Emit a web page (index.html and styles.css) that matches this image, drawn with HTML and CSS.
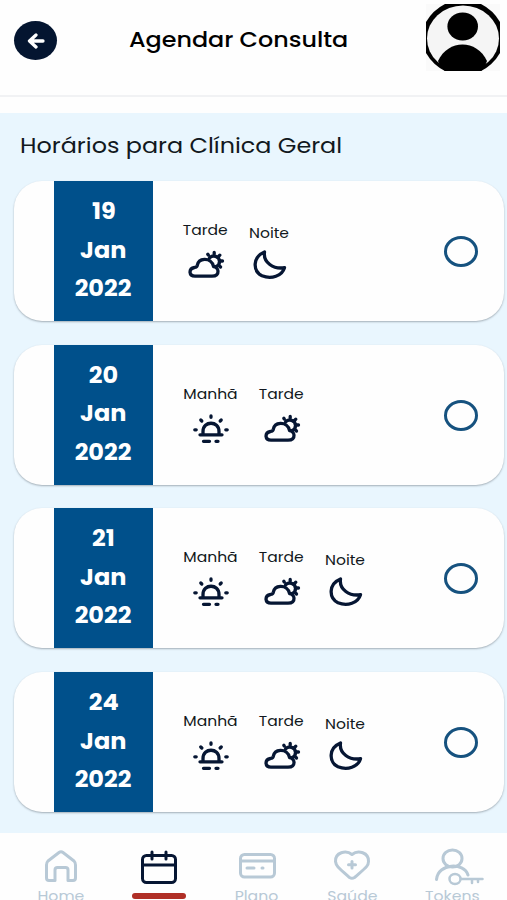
FILE: index.html
```html
<!DOCTYPE html>
<html lang="pt-BR">
<head>
    <meta charset="UTF-8">
    <meta name="viewport" content="width=device-width, initial-scale=1.0">
    <title>Agendar Consulta</title>
    <link rel="stylesheet" href="styles.css">
</head>
<body>

    <!-- icons -->
    <svg class="sprite">
        <symbol id="cloud" viewBox="0 0 38 32">
            <path d="M8 27.200 H25 C29.500 27.200 31.200 25 31 22 C30.800 19.500 28.500 17.800 26.500 17.500 C25.500 12.500 21.500 10.200 17.500 10.300 C13.500 10.500 10.800 13 10.300 16.300 C10 17.700 9 18.200 7.500 18.500 C4.500 19 3 21 3 23.200 C3.200 25.800 5 27.200 8 27.200 Z"/>
            <path d="M22.500 9 C25.500 5.300 32.500 7 32.500 12.500 C32.500 15 31.200 16.800 29 17.500 M21.300 6 L20.800 5.300 M27.200 5 V3.500 M32 7 L32.800 6.200 M34 12 H35.500 M32.500 17 L33.500 18"/>
        </symbol>
        <symbol id="moon" viewBox="0 0 34 32">
            <path d="M11.500 3 C-0.500 8 -0.500 22 9 26.800 C18.500 30.500 29 27 31.500 18.700 C20.500 20.500 10 13.500 11.500 3 Z"/>
        </symbol>
        <symbol id="sunrise" viewBox="0 0 38 32">
            <path d="M8 21.800 H30 M11 21.500 V18.500 C11 7.500 27 7.500 27 18.500 V21.500 M19 3 V4.300 M8.800 7 L9.800 8 M29.200 7 L28.200 8 M2.800 16.800 H4.200 M33.800 16.800 H35.200 M11.500 28.300 H17.500 M24 28.300 H26"/>
        </symbol>
    </svg>

    <div class="app">
        <header class="header">
            <button class="back-btn" aria-label="Voltar">
                <svg viewBox="0 0 18 16"><path d="M16 8 H3 M9 2 L2.500 8 L9 14"/></svg>
            </button>
            <h1><span>Agendar Consulta</span></h1>
            <svg class="avatar" viewBox="0 0 74 67">
                <rect width="74" height="67" fill="#fafafa"/>
                <path d="M19 0 H55 Q67 6 74 18 V49 Q67 61 55 67 H19 Q7 61 0 49 V18 Q7 6 19 0 Z" fill="#000"/>
                <ellipse cx="37" cy="34.500" rx="36" ry="33" fill="#f5f5f5"/>
                <ellipse cx="36.700" cy="22.500" rx="15.300" ry="14" fill="#000"/>
                <path d="M12 57 C22 35 51 35 61 57 Q58 65 55 67 H19 Q14 63 12 57 Z" fill="#000"/>
            </svg>
        </header>

        <main class="content">
            <h2><span>Horários para Clínica Geral</span></h2>

            <div class="card">
                <div class="date"><span>19</span><span>Jan</span><span>2022</span></div>
                <div class="periods">
                    <div class="period tarde"><span>Tarde</span><svg><use href="#cloud"/></svg></div>
                    <div class="period noite"><span>Noite</span><svg><use href="#moon"/></svg></div>
                </div>
                <span class="radio"></span>
            </div>

            <div class="card">
                <div class="date"><span>20</span><span>Jan</span><span>2022</span></div>
                <div class="periods">
                    <div class="period manha"><span>Manhã</span><svg><use href="#sunrise"/></svg></div>
                    <div class="period tarde"><span>Tarde</span><svg><use href="#cloud"/></svg></div>
                </div>
                <span class="radio"></span>
            </div>

            <div class="card">
                <div class="date"><span>21</span><span>Jan</span><span>2022</span></div>
                <div class="periods">
                    <div class="period manha"><span>Manhã</span><svg><use href="#sunrise"/></svg></div>
                    <div class="period tarde"><span>Tarde</span><svg><use href="#cloud"/></svg></div>
                    <div class="period noite"><span>Noite</span><svg><use href="#moon"/></svg></div>
                </div>
                <span class="radio"></span>
            </div>

            <div class="card">
                <div class="date"><span>24</span><span>Jan</span><span>2022</span></div>
                <div class="periods">
                    <div class="period manha"><span>Manhã</span><svg><use href="#sunrise"/></svg></div>
                    <div class="period tarde"><span>Tarde</span><svg><use href="#cloud"/></svg></div>
                    <div class="period noite"><span>Noite</span><svg><use href="#moon"/></svg></div>
                </div>
                <span class="radio"></span>
            </div>
        </main>

        <nav class="tabbar">
            <a class="tab">
                <svg viewBox="0 0 50 40"><path d="M12 15 L23 6.500 Q25 5 27 6.500 L38 15 Q39.500 16.500 39.500 19 V32 Q39.500 34.500 37 34.500 H32 V24 Q32 21.500 29.500 21.500 H21.500 Q19 21.500 19 24 V34.500 H13 Q10.500 34.500 10.500 32 V19 Q10.500 16.500 12 15"/></svg>
                <span>Home</span>
            </a>
            <a class="tab active">
                <svg viewBox="0 0 50 40"><rect x="8.500" y="9.500" width="33" height="27" rx="4"/><path d="M8.500 19 H41.500 M18 6 V13 M32 6 V13"/></svg>
                <span class="bar"></span>
            </a>
            <a class="tab">
                <svg viewBox="0 0 50 40"><rect x="8.500" y="8.500" width="34" height="22.500" rx="4"/><path d="M8.500 15 H42.500 M15 22 H22 M30 22 H31"/></svg>
                <span>Plano</span>
            </a>
            <a class="tab">
                <svg viewBox="0 0 50 40"><path d="M25 8.500 C19 3.500 8 6.500 8.500 15.500 C9 20 11 21.500 22.500 31.500 Q25 33 27.500 31.500 C39 21.500 41.500 20 41.500 15.500 C42 6.500 31 3.500 25 8.500 Z"/><path d="M25 15.500 V22 M21.500 18.800 H28.500"/></svg>
                <span>Saúde</span>
            </a>
            <a class="tab">
                <svg viewBox="0 0 50 40"><ellipse cx="25.500" cy="12.500" rx="9.500" ry="8.500"/><path d="M9.500 33.500 C11 17 37 16 41 29"/><g class="key"><ellipse cx="28" cy="33" rx="5.500" ry="5"/><path d="M34 33 H55.500 M45 33 V37 M51 33 V36"/></g></svg>
                <span>Tokens</span>
            </a>
        </nav>
    </div>

</body>
</html>
```
FILE: styles.css
```css
* {
    box-sizing: border-box;
}

body {
    margin: 0;
    font-family: 'Poppins', 'Inter', sans-serif;
    font-feature-settings: 'cv11';
    color: #111820;
    background: #fefefe;
}

.sprite {
    display: none;
}

svg {
    fill: none;
    stroke-linecap: round;
    stroke-linejoin: round;
}

.app {
    height: 900px;
    display: flex;
    flex-direction: column;
    overflow: hidden;
}

.header {
    flex: none;
    height: 97px;
    padding: 4px 7px 0 14px;
    border-bottom: 2px solid #f1f2f4;
    display: flex;
    align-items: flex-start;
}

.back-btn {
    width: 43px;
    height: 39px;
    margin-top: 17px;
    padding: 0;
    border: none;
    border-radius: 50%;
    background: #041530;
    display: flex;
    align-items: center;
    justify-content: center;
}

.back-btn svg {
    width: 18px;
    height: 16px;
    stroke: #fff;
    stroke-width: 3.300;
}

h1 {
    margin: 19px 0 0 42px;
    width: 280px;
    text-align: center;
    font-size: 21px;
    line-height: 33px;
    font-weight: 500;
    color: #000;
    white-space: nowrap;
}

h1 span {
    display: inline-block;
    transform: scaleX(1.135);
}

.avatar {
    width: 74px;
    height: 67px;
    margin-left: auto;
    stroke: none;
}

.content {
    flex: none;
    height: 720px;
    margin-top: 16px;
    padding: 0 3px 0 14px;
    background: #e9f6fe;
}

h2 {
    margin: 0;
    padding: 17px 0 0 6px;
    height: 68px;
    font-size: 21px;
    line-height: 32px;
    font-weight: 400;
    white-space: nowrap;
}

h2 span {
    display: inline-block;
    transform: scaleX(1.137);
    transform-origin: left;
}

.card {
    height: 140px;
    margin-bottom: 23.700px;
    padding: 0 26px 0 40px;
    border-radius: 28px;
    background: #fefefe;
    box-shadow: 0 1px 2px rgba(60, 70, 80, 0.4);
    display: flex;
}

.date {
    width: 99px;
    padding-top: 12px;
    background: #00508b;
    color: #fff;
    font-size: 22px;
    line-height: 38.500px;
    font-weight: 700;
    display: flex;
    flex-direction: column;
    align-items: center;
}

.date span {
    transform: scaleX(1.09);
}

.periods {
    flex: 1;
    padding: 39px 0 0 30px;
    display: flex;
    gap: 21px;
}

.period {
    display: flex;
    flex-direction: column;
    align-items: center;
    font-size: 14px;
    line-height: 21px;
}

.period span {
    transform: scaleX(1.11);
}

.period svg {
    width: 38px;
    height: 32px;
    margin-top: 8px;
    stroke: #061633;
    stroke-width: 3.300;
}

.manha {
    width: 55px;
}

.tarde {
    width: 45px;
}

.noite {
    width: 40px;
    padding-top: 3px;
}

.noite svg {
    width: 34px;
    margin-top: 5px;
    margin-left: 2px;
}

.radio {
    width: 34px;
    height: 31px;
    margin-top: 55px;
    border: 3px solid #16527f;
    border-radius: 50%;
}

.tabbar {
    flex: 1;
    padding-top: 13px;
    display: grid;
    grid-template-columns: 98px 98px 97px 94px 106px;
    margin-left: 12px;
}

.tab {
    display: flex;
    flex-direction: column;
    align-items: center;
    font-size: 14px;
    line-height: 20px;
    color: #b8c9d6;
}

.tab svg {
    width: 50px;
    height: 40px;
    stroke: #b8c9d6;
    stroke-width: 3;
    overflow: visible;
}

.tab span {
    transform: scaleX(1.12);
}

.tab .key {
    stroke-width: 2.500;
}

.active svg {
    stroke: #061633;
}

.tab .bar {
    width: 54px;
    height: 6px;
    margin-top: 7px;
    border-radius: 3px;
    background: #b02f26;
    transform: none;
}
```
